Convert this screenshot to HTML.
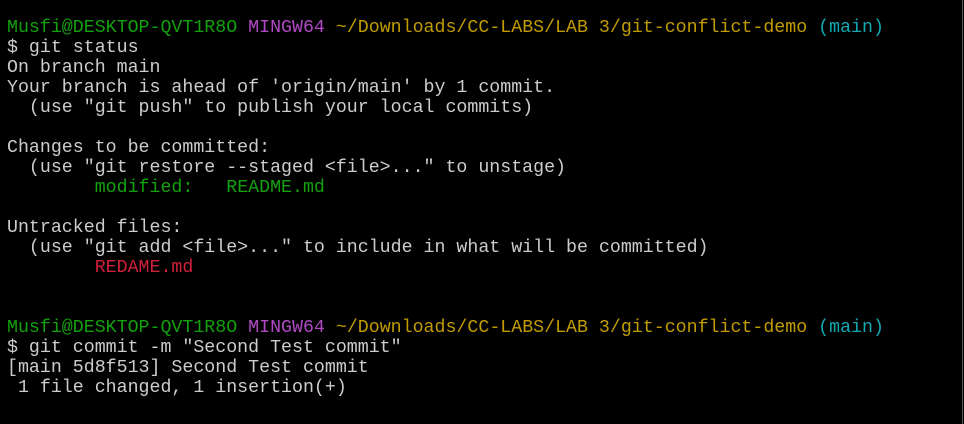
<!DOCTYPE html>
<html><head><style>
html,body{margin:0;padding:0;background:#000;width:964px;height:424px;overflow:hidden}
pre{margin:0;position:absolute;left:7px;top:18px;font-family:"Liberation Mono",monospace;font-size:18.27px;line-height:20px;color:#cccccc}
.g{color:#13a10e}.m{color:#b148c6}.y{color:#c19c00}.c{color:#11a8b0}.r{color:#d0203a}
.bar{position:absolute;right:1px;top:0;width:1px;height:424px;background:#5a5a5a}
</style></head><body>
<pre><span class="g">Musfi@DESKTOP-QVT1R8O</span> <span class="m">MINGW64</span> <span class="y">~/Downloads/CC-LABS/LAB 3/git-conflict-demo</span> <span class="c">(main)</span>
$ git status
On branch main
Your branch is ahead of 'origin/main' by 1 commit.
  (use "git push" to publish your local commits)

Changes to be committed:
  (use "git restore --staged &lt;file&gt;..." to unstage)
        <span class="g">modified:   README.md</span>

Untracked files:
  (use "git add &lt;file&gt;..." to include in what will be committed)
        <span class="r">REDAME.md</span>


<span class="g">Musfi@DESKTOP-QVT1R8O</span> <span class="m">MINGW64</span> <span class="y">~/Downloads/CC-LABS/LAB 3/git-conflict-demo</span> <span class="c">(main)</span>
$ git commit -m "Second Test commit"
[main 5d8f513] Second Test commit
 1 file changed, 1 insertion(+)</pre>
<div class="bar"></div>
</body></html>
